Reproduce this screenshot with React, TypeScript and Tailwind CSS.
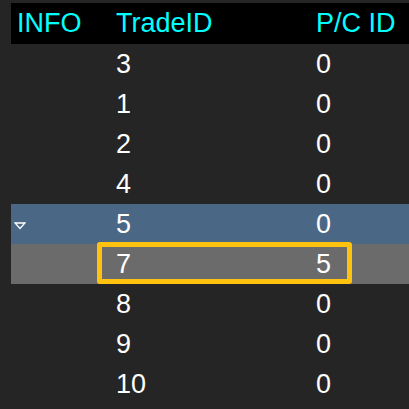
import React from 'react';

type Row = { tradeId: string; pcId: string; kind?: 'parent' | 'child' };

const rows: Row[] = [
  { tradeId: '3', pcId: '0' },
  { tradeId: '1', pcId: '0' },
  { tradeId: '2', pcId: '0' },
  { tradeId: '4', pcId: '0' },
  { tradeId: '5', pcId: '0', kind: 'parent' },
  { tradeId: '7', pcId: '5', kind: 'child' },
  { tradeId: '8', pcId: '0' },
  { tradeId: '9', pcId: '0' },
  { tradeId: '10', pcId: '0' },
];

const font = { fontFamily: '"Liberation Sans", Arial, sans-serif' };

const App: React.FC = () => {
  return (
    <div className="w-[409px] h-[409px] bg-[#252525] pt-[3px] pl-[11px] overflow-hidden" style={font}>
      {/* header */}
      <div className="flex items-center h-[41px] bg-black text-[#00ffff] text-[27px]">
        <div className="w-[105px] pl-[6px]">INFO</div>
        <div className="w-[200px]">TradeID</div>
        <div className="flex-1">P/C ID</div>
      </div>

      {rows.map((row, i) => {
        const bg =
          row.kind === 'parent' ? 'bg-[#4a6885]' : row.kind === 'child' ? 'bg-[#6b6b6b]' : '';
        return (
          <div key={i} className={`relative flex items-center h-[40px] text-white text-[27px] ${bg}`}>
            <div className="w-[105px] flex items-center pl-[3px]">
              {row.kind === 'parent' && (
                <svg width="12" height="8" viewBox="0 0 12 8" className="mt-[4px]">
                  <path d="M1 1 L11 1 L6 6.5 Z" fill="none" stroke="white" strokeWidth="1.3" />
                </svg>
              )}
            </div>
            <div className="w-[200px]">{row.tradeId}</div>
            <div className="flex-1">{row.pcId}</div>
            {row.kind === 'child' && (
              <div className="absolute left-[86px] top-[-2px] w-[255px] h-[42px] border-[5px] border-[#ffc30f] rounded-[3px]" />
            )}
          </div>
        );
      })}
    </div>
  );
};

export default App;
